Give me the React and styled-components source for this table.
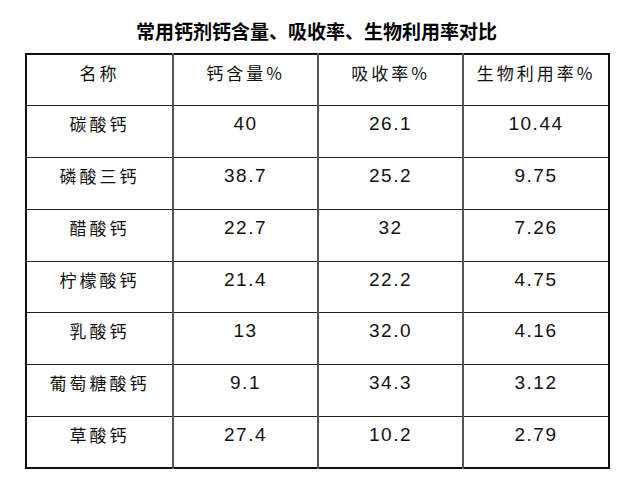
import React from 'react';
import styled, { createGlobalStyle } from 'styled-components';

const GlobalStyle = createGlobalStyle`
  html, body {
    margin: 0;
    padding: 0;
    background: #fff;
  }
`;

const Page = styled.div`
  width: 640px;
  height: 481px;
  background: #fff;
  overflow: hidden;
`;

const Title = styled.h1`
  margin: 0;
  width: 583px;
  margin-left: 25px;
  height: 53px;
  box-sizing: border-box;
  padding-top: 19px;
  text-align: center;
  font-family: 'Noto Sans CJK SC', sans-serif;
  font-weight: 700;
  font-size: 19px;
  line-height: 24px;
  color: #000;
`;

const Table = styled.table`
  margin-left: 25px;
  width: 583px;
  height: 414px;
  border-collapse: collapse;
  table-layout: fixed;
  border: 2px solid #111;
`;

const Cell = styled.td`
  box-sizing: border-box;
  height: 51.75px;
  padding: 7px 0 0;
  vertical-align: top;
  text-align: center;
  border-top: ${(p) => (p.$first ? 'none' : '1.5px solid #222')};
  border-left: ${(p) => (p.$lead ? 'none' : '2px solid #555')};
  color: #111;
  line-height: 22px;
  font-family: ${(p) =>
    p.$num ? "'Liberation Sans', Arial, sans-serif" : "'Noto Sans CJK SC', sans-serif"};
  font-size: ${(p) => (p.$num ? '19px' : '17px')};
  letter-spacing: ${(p) => (p.$num ? '1.5px' : '3px')};
`;

const Col = styled.col`
  width: ${(p) => p.$w}px;
`;

const headers = ['名称', '钙含量%', '吸收率%', '生物利用率%'];

const rows = [
  ['碳酸钙', '40', '26.1', '10.44'],
  ['磷酸三钙', '38.7', '25.2', '9.75'],
  ['醋酸钙', '22.7', '32', '7.26'],
  ['柠檬酸钙', '21.4', '22.2', '4.75'],
  ['乳酸钙', '13', '32.0', '4.16'],
  ['葡萄糖酸钙', '9.1', '34.3', '3.12'],
  ['草酸钙', '27.4', '10.2', '2.79'],
];

export default function App() {
  return (
    <Page>
      <GlobalStyle />
      <Title>常用钙剂钙含量、吸收率、生物利用率对比</Title>
      <Table>
        <colgroup>
          <Col $w={147} />
          <Col $w={145} />
          <Col $w={145} />
          <Col $w={146} />
        </colgroup>
        <tbody>
          <tr>
            {headers.map((h, i) => (
              <Cell key={h} $first $lead={i === 0}>
                {h}
              </Cell>
            ))}
          </tr>
          {rows.map((r) => (
            <tr key={r[0]}>
              {r.map((v, i) => (
                <Cell key={i} $lead={i === 0} $num={i > 0}>
                  {v}
                </Cell>
              ))}
            </tr>
          ))}
        </tbody>
      </Table>
    </Page>
  );
}
